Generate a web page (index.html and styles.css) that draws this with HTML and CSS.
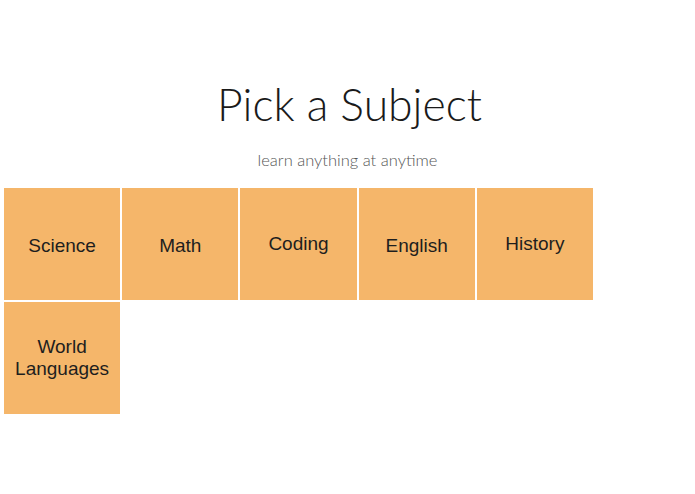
FILE: index.html
```html
<!DOCTYPE html>
<html>
    <head>
        <title>Pick a Subject</title>
        <link rel="stylesheet" href="styles.css">
    </head>
    <body>
        <div class="topo">
            <h1>Pick a Subject</h1>
            <p class="sub">learn anything at anytime</p>
        </div>
        <div class="materias">
            <div class="casa casa-baixa">Science</div>
            <div class="casa casa-baixa">Math</div>
            <div class="casa">Coding</div>
            <div class="casa casa-baixa">English</div>
            <div class="casa">History</div>
            <div class="casa">World<br>Languages</div>
        </div>
    </body>
</html>
```
FILE: styles.css
```css
body{
    margin: 0;
    background-color: white;
    font-family: "Liberation Sans", Arial, sans-serif;
}
.topo{
    text-align: center;
    padding-top: 77px;
}
.topo h1{
    margin: 0;
    font-family: Lato, "Open Sans", sans-serif;
    font-weight: 300;
    font-size: 44.5px;
    line-height: 54px;
    color: #1a1a1a;
    padding-left: 4px;
}
.sub{
    margin: 19px 0 0 0;
    font-family: Lato, "Open Sans", sans-serif;
    font-weight: 300;
    font-size: 16.5px;
    line-height: 20px;
    color: #555;
}
.materias{
    display: grid;
    grid-template-columns: repeat(5, 1fr);
    grid-auto-rows: 112px;
    gap: 2px;
    width: 589px;
    margin-left: 4px;
    margin-top: 18px;
}
.casa{
    background-color: #f5b66a;
    color: #1e1e1e;
    font-size: 19px;
    line-height: 22px;
    display: flex;
    align-items: center;
    justify-content: center;
    text-align: center;
}
.casa-baixa{
    padding-top: 4px;
}
```
